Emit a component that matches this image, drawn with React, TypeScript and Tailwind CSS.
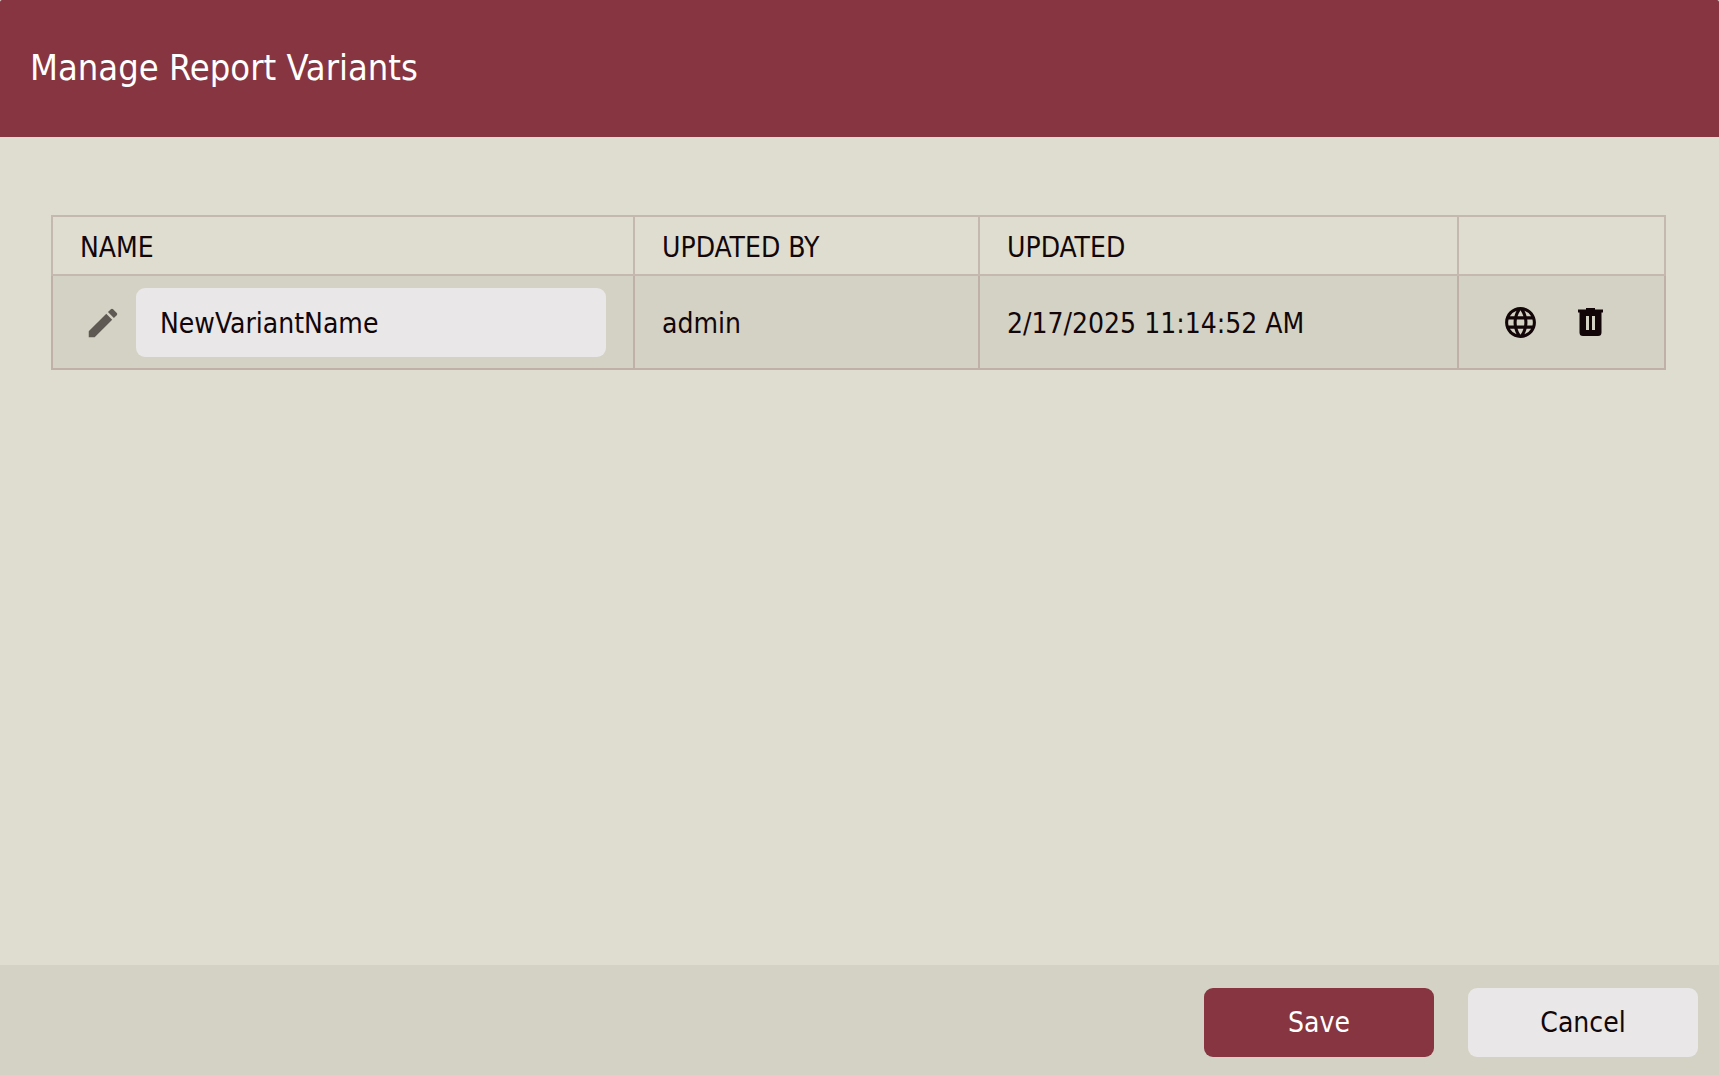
import { useState } from "react";
import { MdEdit, MdLanguage } from "react-icons/md";

interface Variant {
  name: string;
  updatedBy: string;
  updated: string;
}

const initialVariants: Variant[] = [
  {
    name: "NewVariantName",
    updatedBy: "admin",
    updated: "2/17/2025 11:14:52 AM",
  },
];

const TrashIcon = () => (
  <svg className="h-[28px] w-[25px]" viewBox="0 0 25 28" aria-hidden="true">
    <path
      fill="currentColor"
      fillRule="evenodd"
      d="M8 0h9v1.500h8v3h-1.500V24.500a3.500 3.500 0 0 1-3.500 3.500H5A3.500 3.500 0 0 1 1.500 24.500V4.500H0v-3h8zM8 8v14h3V8zM14 8v14h3V8z"
    />
  </svg>
);

const VariantRow = ({ variant }: { variant: Variant }) => {
  const [name, setName] = useState(variant.name);

  return (
    <tr className="bg-[#d4d2c4]">
      <td className="border-2 border-[#bfb1a8] px-[27px] pt-3 pb-[11px]">
        <div className="flex items-center">
          <label
            htmlFor="variant-name"
            aria-label="Variant name"
            className="px-1 text-[#5e5952]"
          >
            <MdEdit className="size-[38px]" aria-hidden="true" />
          </label>
          <input
            id="variant-name"
            type="text"
            aria-label="Variant name"
            value={name}
            onChange={(e) => setName(e.target.value)}
            className="ml-[10px] h-[69px] min-w-0 flex-1 rounded-[9px] bg-[#e9e7e7] px-6 pt-[2px] outline-none"
          />
        </div>
      </td>
      <td className="border-2 border-[#bfb1a8] px-[27px] pt-1">
        {variant.updatedBy}
      </td>
      <td className="border-2 border-[#bfb1a8] px-[27px] pt-1">
        {variant.updated}
      </td>
      <td className="border-2 border-[#bfb1a8] px-[43px]">
        <div className="flex items-center gap-[39px]">
          <button type="button" aria-label="Make variant public">
            <MdLanguage className="size-[37px]" aria-hidden="true" />
          </button>
          <button type="button" aria-label="Delete variant">
            <TrashIcon />
          </button>
        </div>
      </td>
    </tr>
  );
};

const App: React.FC = () => {
  return (
    <div className="flex min-h-screen flex-col overflow-hidden rounded-t-[2px] bg-[#dfddcf] font-['DejaVu_Sans_Condensed','DejaVu_Sans',sans-serif] text-[28px] leading-9 text-[#120609]">
      <header className="bg-[#863541] px-[30px] pt-[43px] pb-[45px]">
        <h1 className="text-[36px] leading-[49px] text-white">
          Manage Report Variants
        </h1>
      </header>

      <main className="flex-1 pt-[78px] pr-[53px] pl-[51px]">
        <table className="w-full table-fixed border-collapse text-left">
          <colgroup>
            <col />
            <col className="w-[345px]" />
            <col className="w-[479px]" />
            <col className="w-[207px]" />
          </colgroup>
          <thead>
            <tr className="h-[59px]">
              <th className="border-2 border-[#c5b8ae] px-[27px] pt-1 font-normal">
                NAME
              </th>
              <th className="border-2 border-[#c5b8ae] px-[27px] pt-1 font-normal">
                UPDATED BY
              </th>
              <th className="border-2 border-[#c5b8ae] px-[27px] pt-1 font-normal">
                UPDATED
              </th>
              <th className="border-2 border-[#c5b8ae]" aria-label="Actions" />
            </tr>
          </thead>
          <tbody>
            {initialVariants.map((variant) => (
              <VariantRow key={variant.name} variant={variant} />
            ))}
          </tbody>
        </table>
      </main>

      <footer className="flex justify-end gap-[34px] bg-[#d4d2c4] px-[21px] pt-[23px] pb-[18px]">
        <button
          type="button"
          className="h-[69px] w-[230px] rounded-[9px] bg-[#863541] text-white"
        >
          Save
        </button>
        <button
          type="button"
          className="h-[69px] w-[230px] rounded-[9px] bg-[#e9e7e7]"
        >
          Cancel
        </button>
      </footer>
    </div>
  );
};

export default App;
